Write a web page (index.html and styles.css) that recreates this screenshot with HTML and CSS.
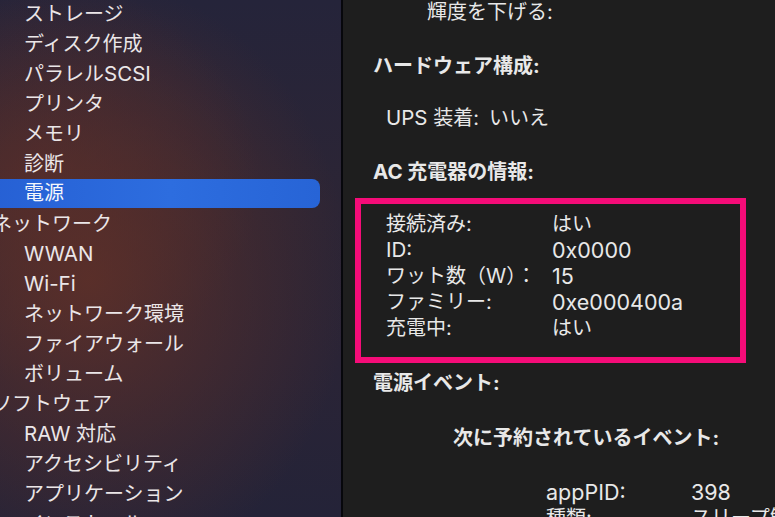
FILE: index.html
```html
<!DOCTYPE html>
<html lang="ja">
<head>
<meta charset="utf-8">
<link rel="stylesheet" href="styles.css">
</head>
<body>
<div class="window">
  <nav class="sidebar">
    <ul class="tree">
      <li class="item">ストレージ</li>
      <li class="item">ディスク作成</li>
      <li class="item">パラレル<span class="lat">SCSI</span></li>
      <li class="item">プリンタ</li>
      <li class="item">メモリ</li>
      <li class="item">診断</li>
      <li class="item selected">電源</li>
      <li class="group">ネットワーク</li>
      <li class="item"><span class="lat">WWAN</span></li>
      <li class="item"><span class="lat">Wi-Fi</span></li>
      <li class="item">ネットワーク環境</li>
      <li class="item">ファイアウォール</li>
      <li class="item">ボリューム</li>
      <li class="group">ソフトウェア</li>
      <li class="item"><span class="lat">RAW</span> 対応</li>
      <li class="item">アクセシビリティ</li>
      <li class="item">アプリケーション</li>
      <li class="item">インストール</li>
    </ul>
  </nav>
  <div class="divider"></div>
  <main class="detail">
    <div class="line sub">輝度を下げる:</div>
    <div class="line head gap-a">ハードウェア構成:</div>
    <div class="line kv gap-b"><span class="k"><span class="lat">UPS</span> 装着:</span><span>いいえ</span></div>
    <div class="line head gap-a"><span class="lat">AC</span> 充電器の情報:</div>
    <div class="box">
      <div class="row"><span class="bk">接続済み:</span><span>はい</span></div>
      <div class="row"><span class="bk"><span class="lat">ID:</span></span><span class="lat num">0x0000</span></div>
      <div class="row"><span class="bk">ワット数（<span class="lat">W</span>）：</span><span class="lat num">15</span></div>
      <div class="row"><span class="bk">ファミリー:</span><span class="lat num">0xe000400a</span></div>
      <div class="row"><span class="bk">充電中:</span><span>はい</span></div>
    </div>
    <div class="line head gap-c">電源イベント:</div>
    <div class="line head2 gap-d">次に予約されているイベント:</div>
    <div class="line ev gap-e"><span class="ek lat num">appPID:</span><span class="lat num">398</span></div>
    <div class="line ev"><span class="ek">種類:</span><span>スリープ解除</span></div>
  </main>
</div>
</body>
</html>
```

FILE: styles.css
```css
html, body {
  margin: 0;
  padding: 0;
  height: 100%;
  overflow: hidden;
  background: #1e1e1e;
}

body {
  font-family: Inter, "Noto Sans CJK JP", sans-serif;
  font-size: 20px;
  -webkit-font-smoothing: antialiased;
}

.lat {
  font-family: Inter, "Liberation Sans", sans-serif;
  font-size: 20.5px;
}

.lat.num {
  font-size: 21.5px;
}

.window {
  display: flex;
  width: 775px;
  height: 517px;
  overflow: hidden;
}

.sidebar {
  width: 341px;
  flex: none;
  height: 100%;
  overflow: hidden;
  background:
    radial-gradient(ellipse 260px 300px at 90px 280px, rgba(95, 48, 40, 0.85), rgba(95, 48, 40, 0) 100%),
    radial-gradient(ellipse 220px 200px at 40px 180px, rgba(90, 45, 40, 0.6), rgba(90, 45, 40, 0) 100%),
    linear-gradient(180deg, #25243a 0%, #2c2535 40%, #2a2436 70%, #242338 100%);
  color: #ebe6e8;
}

.tree {
  list-style: none;
  margin: -1px 0 0 0;
  padding: 0;
}

.tree li {
  height: 30px;
  line-height: 30px;
  white-space: nowrap;
}

.item {
  padding-left: 24px;
}

.group {
  margin-left: -8px;
}

.selected {
  margin-left: -12px;
  padding-left: 36px;
  margin-right: 21px;
  height: 29px !important;
  line-height: 29px !important;
  margin-bottom: 1px;
  border-radius: 8px;
  background: linear-gradient(90deg, #2660d4 0%, #2d6ddf 55%, #2764d6 100%);
  color: #f4f6fb;
}

.divider {
  width: 2px;
  flex: none;
  background: #07070c;
}

.detail {
  flex: 1;
  background: #1e1e1e;
  color: #e8e8e8;
  padding-left: 12px;
}

.line {
  height: 26px;
  line-height: 26px;
  white-space: nowrap;
}

.line:first-child {
  margin-top: -1px;
}

.sub {
  padding-left: 72px;
}

.head {
  padding-left: 18px;
  font-weight: bold;
}

.head2 {
  padding-left: 98px;
  font-weight: bold;
}

.kv {
  padding-left: 31px;
  display: flex;
}

.kv .k {
  margin-right: 10px;
}

.gap-a { margin-top: 28px; }
.gap-b { margin-top: 26px; }
.gap-c { margin-top: 7px; }
.gap-d { margin-top: 29px; }
.gap-e { margin-top: 28px; }

.box {
  margin-top: 13px;
  width: 354px;
  border: 6px solid #f50c78;
  padding: 7px 0 16px 25px;
}

.row {
  display: flex;
  height: 26px;
  line-height: 26px;
  white-space: nowrap;
}

.bk {
  width: 166px;
  flex: none;
}

.ev {
  display: flex;
  padding-left: 191px;
}

.ek {
  width: 145px;
  flex: none;
}
```
